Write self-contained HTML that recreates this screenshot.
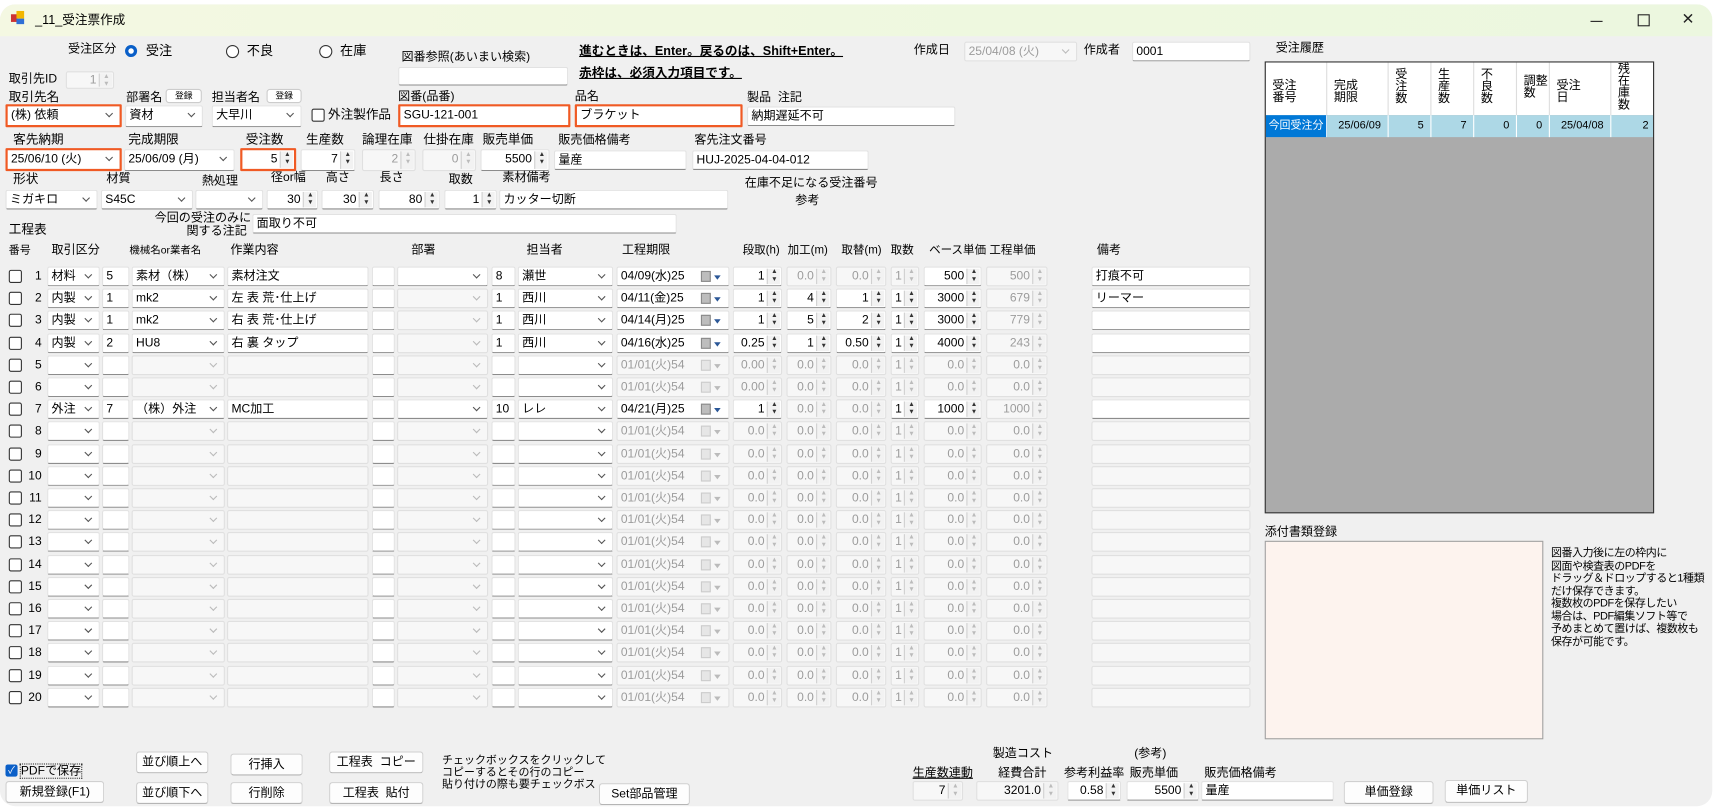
<!DOCTYPE html>
<html><head><meta charset="utf-8"><style>
html,body{margin:0;padding:0;background:#fff;width:1720px;height:812px;overflow:hidden}
#sc{position:absolute;left:0;top:0;width:1568px;height:740px;transform:scale(1.0969);transform-origin:0 0;font-family:"Liberation Sans","Noto Sans CJK JP",sans-serif;font-size:11px;color:#000}
#win{position:absolute;left:0;top:4px;width:1561px;height:731px;border-radius:14px;overflow:hidden;background:#f0f0f0}
#tb{position:absolute;left:0;top:0;width:100%;height:29px;background:linear-gradient(90deg,#f4f8e2,#eef8df 60%,#ecf7df)}
.l{position:absolute;white-space:nowrap;line-height:14px}
.e{position:absolute;box-sizing:border-box;height:18px;line-height:16px;padding:0 3px;white-space:nowrap;overflow:hidden}
.w{background:#fff;border:1px solid #e2e2e2;border-bottom-color:#8c8c8c;border-radius:2px}
.d{background:#f7f7f7;border:1px solid #e0e0e0;color:#9c9c9c;border-radius:2px}
.red{border:2px solid #f05a24;border-radius:1px}
.c{padding-right:16px}
.c::after{content:"";position:absolute;right:7px;top:4px;width:4px;height:4px;border-right:1px solid #555;border-bottom:1px solid #555;transform:rotate(45deg)}
.d.c::after{border-color:#bbb}
.s{text-align:right;padding-right:15px}
.s::after{content:"";position:absolute;right:1px;top:1px;bottom:1px;width:11px;background:#f2f2f2;border-left:1px solid #d0d0d0}
.s::before{content:"\25B2\A\25BC";white-space:pre;position:absolute;right:3px;top:1px;font-size:6px;line-height:7px;color:#333;z-index:1}
.d.s::before{color:#bbb}
.r{position:absolute;left:0;width:1150px;height:18px;line-height:16px}
.r .e{top:0}
.ck{position:absolute;left:8px;top:3px;width:10px;height:10px;border:1px solid #333;border-radius:2px;background:#fff}
.no{position:absolute;left:22px;width:16px;text-align:right;top:0;line-height:18px;font-weight:normal}
.kb{left:43px;width:48px}.kn{left:93px;width:25px}.km{left:120px;width:85px}.sg{left:207px;width:129px}
.bs{left:339px;width:21px}.bc{left:362px;width:83px}.tn{left:448px;width:22px}.tc{left:472px;width:87px}
.dt{left:562px;width:103px}.s1{left:668px;width:45px}.s2{left:717px;width:41px}.s3{left:762px;width:46px}
.s4{left:812px;width:26px}.s5{left:842px;width:53px}.s6{left:899px;width:56px}.bk{left:995px;width:145px}
.cal{position:absolute;right:16px;top:3px;width:9px;height:10px;background:#bdbdbd;border:1px solid #8a8a8a;box-sizing:border-box}
.cal::after{content:"";position:absolute;left:11px;top:3px;border-left:3px solid transparent;border-right:3px solid transparent;border-top:4px solid #2b5797}
.d .cal{background:#e6e6e6;border-color:#ccc}.d .cal::after{border-top-color:#bbb}
.btn{position:absolute;box-sizing:border-box;background:#fdfdfd;border:1px solid #d0d0d0;border-bottom-color:#b5b5b5;border-radius:3px;text-align:center;line-height:18px;height:20px;font-size:11px}
.sb{position:absolute;box-sizing:border-box;font-size:8px;background:#fff;border:1px solid #ccc;border-radius:3px;height:13px;line-height:11px;text-align:center}
.rad{position:absolute;width:10px;height:10px;border:1px solid #333;border-radius:50%;background:#fff}
.gh{position:absolute;top:0;height:48px;border-right:1px solid #ddd;line-height:11px;font-size:11px;padding:4px 0 0 6px;box-sizing:border-box}
.gr{position:absolute;top:0;height:20px;line-height:20px;text-align:right;padding-right:6px;box-sizing:border-box;border-right:1px solid #fff;font-size:10px}
</style></head><body><div id="sc"><div id="win">
<div id="tb">
<div style="position:absolute;left:10px;top:9px;width:6px;height:7px;background:#c33"></div>
<div style="position:absolute;left:15px;top:6px;width:7px;height:7px;background:#f2b600"></div>
<div style="position:absolute;left:15px;top:13px;width:7px;height:5px;background:#2f6fd6"></div>
<span class="l" style="left:32px;top:8px;font-size:11.5px">_11_受注票作成</span>
<div style="position:absolute;left:1450px;top:15px;width:11px;height:1px;background:#222"></div>
<div style="position:absolute;left:1493px;top:9px;width:9px;height:9px;border:1px solid #222"></div>
<span class="l" style="left:1533px;top:6px;font-size:14px;color:#222">✕</span>
</div>
<div style="position:absolute;left:0;top:-4px;width:100%">
<span class="l" style="left:62px;top:38px">受注区分</span>
<div class="rad" style="left:114px;top:41px;border:3.5px solid #0a5fc8;width:5px;height:5px"></div><span class="l" style="left:133px;top:39px;font-size:12px">受注</span>
<div class="rad" style="left:206px;top:41px"></div><span class="l" style="left:225px;top:39px;font-size:12px">不良</span>
<div class="rad" style="left:291px;top:41px"></div><span class="l" style="left:310px;top:39px;font-size:12px">在庫</span>
<span class="l" style="left:366px;top:45px">図番参照(あいまい検索)</span>
<div class="e w" style="left:363px;top:61px;width:155px;height:17px"></div>
<span class="l" style="left:528px;top:40px;font-weight:bold;font-size:11.5px;text-decoration:underline">進むときは、Enter。戻るのは、Shift+Enter。</span>
<span class="l" style="left:528px;top:60px;font-weight:bold;font-size:11.5px;text-decoration:underline">赤枠は、必須入力項目です。</span>
<span class="l" style="left:833px;top:39px">作成日</span>
<div class="e d c" style="left:879px;top:38px;width:103px">25/04/08 (火)</div>
<span class="l" style="left:988px;top:39px">作成者</span>
<div class="e w" style="left:1032px;top:38px;width:108px">0001</div>
<span class="l" style="left:8px;top:65px">取引先ID</span>
<div class="e d s" style="left:60px;top:65px;width:44px;height:16px;line-height:14px">1</div>
<span class="l" style="left:8px;top:82px;font-size:11.5px">取引先名</span>
<span class="l" style="left:115px;top:82px">部署名</span><div class="sb" style="left:151px;top:81px;width:33px">登録</div>
<span class="l" style="left:193px;top:82px">担当者名</span><div class="sb" style="left:243px;top:81px;width:32px">登録</div>
<span class="l" style="left:363px;top:81px">図番(品番)</span>
<span class="l" style="left:524px;top:81px">品名</span>
<span class="l" style="left:681px;top:82px">製品&nbsp;&nbsp;注記</span>
<div class="e w c red" style="left:5px;top:95px;width:106px;height:21px;line-height:17px">(株) 依頼</div>
<div class="e w c" style="left:114px;top:96px;width:71px;height:20px">資材</div>
<div class="e w c" style="left:193px;top:96px;width:82px;height:20px">大早川</div>
<div style="position:absolute;left:284px;top:99px;width:10px;height:10px;border:1px solid #333;border-radius:2px;background:#fff"></div>
<span class="l" style="left:299px;top:98px;font-size:11.5px">外注製作品</span>
<div class="e w red" style="left:363px;top:95px;width:157px;height:21px;line-height:17px">SGU-121-001</div>
<div class="e w red" style="left:524px;top:95px;width:153px;height:21px;line-height:17px">ブラケット</div>
<div class="e w" style="left:681px;top:97px;width:190px">納期遅延不可</div>
<span class="l" style="left:12px;top:121px;font-size:11.5px">客先納期</span>
<span class="l" style="left:117px;top:121px;font-size:11.5px">完成期限</span>
<span class="l" style="left:224px;top:121px;font-size:11.5px">受注数</span>
<span class="l" style="left:279px;top:121px;font-size:11.5px">生産数</span>
<span class="l" style="left:330px;top:121px;font-size:11.5px">論理在庫</span>
<span class="l" style="left:386px;top:121px;font-size:11.5px">仕掛在庫</span>
<span class="l" style="left:440px;top:121px;font-size:11.5px">販売単価</span>
<span class="l" style="left:509px;top:121px">販売価格備考</span>
<span class="l" style="left:633px;top:121px">客先注文番号</span>
<div class="e w c red" style="left:5px;top:135px;width:106px;height:21px;line-height:17px">25/06/10 (火)</div>
<div class="e w c" style="left:113px;top:136px;width:101px;height:20px">25/06/09 (月)</div>
<div class="e w s red" style="left:219px;top:135px;width:51px;height:21px;line-height:17px">5</div>
<div class="e w s" style="left:274px;top:136px;width:50px;height:20px">7</div>
<div class="e d s" style="left:330px;top:136px;width:49px;height:20px">2</div>
<div class="e d s" style="left:385px;top:136px;width:49px;height:20px">0</div>
<div class="e w s" style="left:438px;top:136px;width:63px;height:20px">5500</div>
<div class="e w" style="left:505px;top:137px;width:121px">量産</div>
<div class="e w" style="left:631px;top:137px;width:161px">HUJ-2025-04-04-012</div>
<span class="l" style="left:12px;top:157px;font-size:11.5px">形状</span>
<span class="l" style="left:97px;top:156px">材質</span>
<span class="l" style="left:184px;top:158px">熱処理</span>
<span class="l" style="left:247px;top:155px">径or幅</span>
<span class="l" style="left:297px;top:155px">高さ</span>
<span class="l" style="left:346px;top:155px">長さ</span>
<span class="l" style="left:409px;top:157px">取数</span>
<span class="l" style="left:458px;top:155px">素材備考</span>
<span class="l" style="left:679px;top:160px">在庫不足になる受注番号</span>
<span class="l" style="left:725px;top:176px">参考</span>
<div class="e w c" style="left:5px;top:173px;width:84px">ミガキロ</div>
<div class="e w c" style="left:92px;top:173px;width:84px">S45C</div>
<div class="e w c" style="left:178px;top:173px;width:62px"></div>
<div class="e w s" style="left:243px;top:173px;width:47px">30</div>
<div class="e w s" style="left:293px;top:173px;width:48px">30</div>
<div class="e w s" style="left:345px;top:173px;width:56px">80</div>
<div class="e w s" style="left:405px;top:173px;width:48px">1</div>
<div class="e w" style="left:455px;top:173px;width:209px">カッター切断</div>
<span class="l" style="left:141px;top:192px">今回の受注のみに</span>
<span class="l" style="left:170px;top:204px">関する注記</span>
<div class="e w" style="left:230px;top:195px;width:387px">面取り不可</div>
<span class="l" style="left:8px;top:203px;font-size:11.5px">工程表</span>
<span class="l" style="left:8px;top:222px;font-size:10px">番号</span>
<span class="l" style="left:47px;top:221px">取引区分</span>
<span class="l" style="left:118px;top:222px;font-size:9.5px">機械名or業者名</span>
<span class="l" style="left:210px;top:221px">作業内容</span>
<span class="l" style="left:375px;top:221px">部署</span>
<span class="l" style="left:480px;top:221px">担当者</span>
<span class="l" style="left:567px;top:221px">工程期限</span>
<span class="l" style="left:677px;top:221px;font-size:10.5px">段取(h)</span>
<span class="l" style="left:718px;top:221px;font-size:10.5px">加工(m)</span>
<span class="l" style="left:767px;top:221px;font-size:10.5px">取替(m)</span>
<span class="l" style="left:812px;top:221px;font-size:10.5px">取数</span>
<span class="l" style="left:847px;top:221px;font-size:10.5px">ベース単価</span>
<span class="l" style="left:902px;top:221px;font-size:10.5px">工程単価</span>
<span class="l" style="left:1000px;top:221px">備考</span>

<div class="r" style="top:243px"><i class="ck"></i><b class="no">1</b><span class="e w c kb">材料</span><span class="e w kn">5</span><span class="e w c km">素材（株）</span><span class="e w sg">素材注文</span><span class="e w bs"></span><span class="e w c bc"></span><span class="e w tn">8</span><span class="e w c tc">瀬世</span><span class="e w dt">04/09(水)25<i class="cal"></i></span><span class="e w s s1">1</span><span class="e d s s2">0.0</span><span class="e d s s3">0.0</span><span class="e d s s4">1</span><span class="e w s s5">500</span><span class="e d s s6">500</span><span class="e w bk">打痕不可</span></div>
<div class="r" style="top:263.2px"><i class="ck"></i><b class="no">2</b><span class="e w c kb">内製</span><span class="e w kn">1</span><span class="e w c km">mk2</span><span class="e w sg">左 表 荒･仕上げ</span><span class="e w bs"></span><span class="e d c bc"></span><span class="e w tn">1</span><span class="e w c tc">西川</span><span class="e w dt">04/11(金)25<i class="cal"></i></span><span class="e w s s1">1</span><span class="e w s s2">4</span><span class="e w s s3">1</span><span class="e w s s4">1</span><span class="e w s s5">3000</span><span class="e d s s6">679</span><span class="e w bk">リーマー</span></div>
<div class="r" style="top:283.4px"><i class="ck"></i><b class="no">3</b><span class="e w c kb">内製</span><span class="e w kn">1</span><span class="e w c km">mk2</span><span class="e w sg">右 表 荒･仕上げ</span><span class="e w bs"></span><span class="e d c bc"></span><span class="e w tn">1</span><span class="e w c tc">西川</span><span class="e w dt">04/14(月)25<i class="cal"></i></span><span class="e w s s1">1</span><span class="e w s s2">5</span><span class="e w s s3">2</span><span class="e w s s4">1</span><span class="e w s s5">3000</span><span class="e d s s6">779</span><span class="e w bk"></span></div>
<div class="r" style="top:303.6px"><i class="ck"></i><b class="no">4</b><span class="e w c kb">内製</span><span class="e w kn">2</span><span class="e w c km">HU8</span><span class="e w sg">右 裏 タップ</span><span class="e w bs"></span><span class="e d c bc"></span><span class="e w tn">1</span><span class="e w c tc">西川</span><span class="e w dt">04/16(水)25<i class="cal"></i></span><span class="e w s s1">0.25</span><span class="e w s s2">1</span><span class="e w s s3">0.50</span><span class="e w s s4">1</span><span class="e w s s5">4000</span><span class="e d s s6">243</span><span class="e w bk"></span></div>
<div class="r" style="top:323.8px"><i class="ck"></i><b class="no">5</b><span class="e w c kb"></span><span class="e w kn"></span><span class="e d c km"></span><span class="e d sg"></span><span class="e w bs"></span><span class="e d c bc"></span><span class="e w tn"></span><span class="e w c tc"></span><span class="e d dt">01/01(火)54<i class="cal"></i></span><span class="e d s s1">0.00</span><span class="e d s s2">0.0</span><span class="e d s s3">0.0</span><span class="e d s s4">1</span><span class="e d s s5">0.0</span><span class="e d s s6">0.0</span><span class="e d bk"></span></div>
<div class="r" style="top:344px"><i class="ck"></i><b class="no">6</b><span class="e w c kb"></span><span class="e w kn"></span><span class="e d c km"></span><span class="e d sg"></span><span class="e w bs"></span><span class="e d c bc"></span><span class="e w tn"></span><span class="e w c tc"></span><span class="e d dt">01/01(火)54<i class="cal"></i></span><span class="e d s s1">0.00</span><span class="e d s s2">0.0</span><span class="e d s s3">0.0</span><span class="e d s s4">1</span><span class="e d s s5">0.0</span><span class="e d s s6">0.0</span><span class="e d bk"></span></div>
<div class="r" style="top:364.2px"><i class="ck"></i><b class="no">7</b><span class="e w c kb">外注</span><span class="e w kn">7</span><span class="e w c km">（株）外注</span><span class="e w sg">MC加工</span><span class="e w bs"></span><span class="e w c bc"></span><span class="e w tn">10</span><span class="e w c tc">レレ</span><span class="e w dt">04/21(月)25<i class="cal"></i></span><span class="e w s s1">1</span><span class="e d s s2">0.0</span><span class="e d s s3">0.0</span><span class="e w s s4">1</span><span class="e w s s5">1000</span><span class="e d s s6">1000</span><span class="e w bk"></span></div>
<div class="r" style="top:384.4px"><i class="ck"></i><b class="no">8</b><span class="e w c kb"></span><span class="e w kn"></span><span class="e d c km"></span><span class="e d sg"></span><span class="e w bs"></span><span class="e d c bc"></span><span class="e w tn"></span><span class="e w c tc"></span><span class="e d dt">01/01(火)54<i class="cal"></i></span><span class="e d s s1">0.0</span><span class="e d s s2">0.0</span><span class="e d s s3">0.0</span><span class="e d s s4">1</span><span class="e d s s5">0.0</span><span class="e d s s6">0.0</span><span class="e d bk"></span></div>
<div class="r" style="top:404.6px"><i class="ck"></i><b class="no">9</b><span class="e w c kb"></span><span class="e w kn"></span><span class="e d c km"></span><span class="e d sg"></span><span class="e w bs"></span><span class="e d c bc"></span><span class="e w tn"></span><span class="e w c tc"></span><span class="e d dt">01/01(火)54<i class="cal"></i></span><span class="e d s s1">0.0</span><span class="e d s s2">0.0</span><span class="e d s s3">0.0</span><span class="e d s s4">1</span><span class="e d s s5">0.0</span><span class="e d s s6">0.0</span><span class="e d bk"></span></div>
<div class="r" style="top:424.8px"><i class="ck"></i><b class="no">10</b><span class="e w c kb"></span><span class="e w kn"></span><span class="e d c km"></span><span class="e d sg"></span><span class="e w bs"></span><span class="e d c bc"></span><span class="e w tn"></span><span class="e w c tc"></span><span class="e d dt">01/01(火)54<i class="cal"></i></span><span class="e d s s1">0.0</span><span class="e d s s2">0.0</span><span class="e d s s3">0.0</span><span class="e d s s4">1</span><span class="e d s s5">0.0</span><span class="e d s s6">0.0</span><span class="e d bk"></span></div>
<div class="r" style="top:445px"><i class="ck"></i><b class="no">11</b><span class="e w c kb"></span><span class="e w kn"></span><span class="e d c km"></span><span class="e d sg"></span><span class="e w bs"></span><span class="e d c bc"></span><span class="e w tn"></span><span class="e w c tc"></span><span class="e d dt">01/01(火)54<i class="cal"></i></span><span class="e d s s1">0.0</span><span class="e d s s2">0.0</span><span class="e d s s3">0.0</span><span class="e d s s4">1</span><span class="e d s s5">0.0</span><span class="e d s s6">0.0</span><span class="e d bk"></span></div>
<div class="r" style="top:465.2px"><i class="ck"></i><b class="no">12</b><span class="e w c kb"></span><span class="e w kn"></span><span class="e d c km"></span><span class="e d sg"></span><span class="e w bs"></span><span class="e d c bc"></span><span class="e w tn"></span><span class="e w c tc"></span><span class="e d dt">01/01(火)54<i class="cal"></i></span><span class="e d s s1">0.0</span><span class="e d s s2">0.0</span><span class="e d s s3">0.0</span><span class="e d s s4">1</span><span class="e d s s5">0.0</span><span class="e d s s6">0.0</span><span class="e d bk"></span></div>
<div class="r" style="top:485.4px"><i class="ck"></i><b class="no">13</b><span class="e w c kb"></span><span class="e w kn"></span><span class="e d c km"></span><span class="e d sg"></span><span class="e w bs"></span><span class="e d c bc"></span><span class="e w tn"></span><span class="e w c tc"></span><span class="e d dt">01/01(火)54<i class="cal"></i></span><span class="e d s s1">0.0</span><span class="e d s s2">0.0</span><span class="e d s s3">0.0</span><span class="e d s s4">1</span><span class="e d s s5">0.0</span><span class="e d s s6">0.0</span><span class="e d bk"></span></div>
<div class="r" style="top:505.6px"><i class="ck"></i><b class="no">14</b><span class="e w c kb"></span><span class="e w kn"></span><span class="e d c km"></span><span class="e d sg"></span><span class="e w bs"></span><span class="e d c bc"></span><span class="e w tn"></span><span class="e w c tc"></span><span class="e d dt">01/01(火)54<i class="cal"></i></span><span class="e d s s1">0.0</span><span class="e d s s2">0.0</span><span class="e d s s3">0.0</span><span class="e d s s4">1</span><span class="e d s s5">0.0</span><span class="e d s s6">0.0</span><span class="e d bk"></span></div>
<div class="r" style="top:525.8px"><i class="ck"></i><b class="no">15</b><span class="e w c kb"></span><span class="e w kn"></span><span class="e d c km"></span><span class="e d sg"></span><span class="e w bs"></span><span class="e d c bc"></span><span class="e w tn"></span><span class="e w c tc"></span><span class="e d dt">01/01(火)54<i class="cal"></i></span><span class="e d s s1">0.0</span><span class="e d s s2">0.0</span><span class="e d s s3">0.0</span><span class="e d s s4">1</span><span class="e d s s5">0.0</span><span class="e d s s6">0.0</span><span class="e d bk"></span></div>
<div class="r" style="top:546px"><i class="ck"></i><b class="no">16</b><span class="e w c kb"></span><span class="e w kn"></span><span class="e d c km"></span><span class="e d sg"></span><span class="e w bs"></span><span class="e d c bc"></span><span class="e w tn"></span><span class="e w c tc"></span><span class="e d dt">01/01(火)54<i class="cal"></i></span><span class="e d s s1">0.0</span><span class="e d s s2">0.0</span><span class="e d s s3">0.0</span><span class="e d s s4">1</span><span class="e d s s5">0.0</span><span class="e d s s6">0.0</span><span class="e d bk"></span></div>
<div class="r" style="top:566.2px"><i class="ck"></i><b class="no">17</b><span class="e w c kb"></span><span class="e w kn"></span><span class="e d c km"></span><span class="e d sg"></span><span class="e w bs"></span><span class="e d c bc"></span><span class="e w tn"></span><span class="e w c tc"></span><span class="e d dt">01/01(火)54<i class="cal"></i></span><span class="e d s s1">0.0</span><span class="e d s s2">0.0</span><span class="e d s s3">0.0</span><span class="e d s s4">1</span><span class="e d s s5">0.0</span><span class="e d s s6">0.0</span><span class="e d bk"></span></div>
<div class="r" style="top:586.4px"><i class="ck"></i><b class="no">18</b><span class="e w c kb"></span><span class="e w kn"></span><span class="e d c km"></span><span class="e d sg"></span><span class="e w bs"></span><span class="e d c bc"></span><span class="e w tn"></span><span class="e w c tc"></span><span class="e d dt">01/01(火)54<i class="cal"></i></span><span class="e d s s1">0.0</span><span class="e d s s2">0.0</span><span class="e d s s3">0.0</span><span class="e d s s4">1</span><span class="e d s s5">0.0</span><span class="e d s s6">0.0</span><span class="e d bk"></span></div>
<div class="r" style="top:606.6px"><i class="ck"></i><b class="no">19</b><span class="e w c kb"></span><span class="e w kn"></span><span class="e d c km"></span><span class="e d sg"></span><span class="e w bs"></span><span class="e d c bc"></span><span class="e w tn"></span><span class="e w c tc"></span><span class="e d dt">01/01(火)54<i class="cal"></i></span><span class="e d s s1">0.0</span><span class="e d s s2">0.0</span><span class="e d s s3">0.0</span><span class="e d s s4">1</span><span class="e d s s5">0.0</span><span class="e d s s6">0.0</span><span class="e d bk"></span></div>
<div class="r" style="top:626.8px"><i class="ck"></i><b class="no">20</b><span class="e w c kb"></span><span class="e w kn"></span><span class="e d c km"></span><span class="e d sg"></span><span class="e w bs"></span><span class="e d c bc"></span><span class="e w tn"></span><span class="e w c tc"></span><span class="e d dt">01/01(火)54<i class="cal"></i></span><span class="e d s s1">0.0</span><span class="e d s s2">0.0</span><span class="e d s s3">0.0</span><span class="e d s s4">1</span><span class="e d s s5">0.0</span><span class="e d s s6">0.0</span><span class="e d bk"></span></div>

<div style="position:absolute;left:5px;top:697px;width:11px;height:11px;background:#0a5fc8;border-radius:2px;color:#fff;font-size:9px;line-height:11px;text-align:center">✓</div>
<span class="l" style="left:18px;top:696px;border:1px dotted #333;line-height:12px">PDFで保存</span>
<div class="btn" style="left:5px;top:712px;width:90px">新規登録(F1)</div>
<div class="btn" style="left:124px;top:685px;width:66px">並び順上へ</div>
<div class="btn" style="left:124px;top:713px;width:66px">並び順下へ</div>
<div class="btn" style="left:210px;top:687px;width:66px">行挿入</div>
<div class="btn" style="left:210px;top:713px;width:66px">行削除</div>
<div class="btn" style="left:300px;top:685px;width:86px">工程表&nbsp;&nbsp;コピー</div>
<div class="btn" style="left:300px;top:713px;width:86px">工程表&nbsp;&nbsp;貼付</div>
<span class="l" style="left:403px;top:688px;font-size:10px;line-height:11px">チェックボックスをクリックして<br>コピーするとその行のコピー<br>貼り付けの際も要チェックボス</span>
<div class="btn" style="left:546px;top:714px;width:83px">Set部品管理</div>
<span class="l" style="left:832px;top:698px;text-decoration:underline">生産数連動</span>
<div class="e d s" style="left:832px;top:712px;width:46px;color:#000">7</div>
<span class="l" style="left:905px;top:680px">製造コスト</span>
<span class="l" style="left:910px;top:698px">経費合計</span>
<div class="e d s" style="left:890px;top:712px;width:75px;color:#000">3201.0</div>
<span class="l" style="left:970px;top:698px">参考利益率</span>
<div class="e w s" style="left:973px;top:712px;width:49px">0.58</div>
<span class="l" style="left:1034px;top:680px">(参考)</span>
<span class="l" style="left:1030px;top:698px">販売単価</span>
<div class="e w s" style="left:1027px;top:712px;width:66px">5500</div>
<span class="l" style="left:1098px;top:698px">販売価格備考</span>
<div class="e w" style="left:1095px;top:712px;width:121px">量産</div>
<div class="btn" style="left:1225px;top:712px;width:82px;height:21px">単価登録</div>
<div class="btn" style="left:1317px;top:711px;width:76px;height:21px">単価リスト</div>

<span class="l" style="left:1163px;top:37px">受注履歴</span>
<div style="position:absolute;left:1153px;top:56px;width:355px;height:412px;border:1px solid #333;box-sizing:border-box;background:#ababab;overflow:hidden">
<div style="position:absolute;left:0;top:0;width:100%;height:48px;background:#fff"></div>
<div class="gh" style="left:0;width:56px;padding-top:16px">受注<br>番号</div>
<div class="gh" style="left:56px;width:56px;padding-top:16px">完成<br>期限</div>
<div class="gh" style="left:112px;width:39px;padding-top:6px">受<br>注<br>数</div>
<div class="gh" style="left:151px;width:39px;padding-top:6px">生<br>産<br>数</div>
<div class="gh" style="left:190px;width:39px;padding-top:6px">不<br>良<br>数</div>
<div class="gh" style="left:229px;width:30px;padding-top:12px">調整<br>数</div>
<div class="gh" style="left:259px;width:56px;padding-top:16px">受注<br>日</div>
<div class="gh" style="left:315px;width:40px;padding-top:1px;border-right:0">残<br>在<br>庫<br>数</div>
<div style="position:absolute;left:0;top:48px;width:100%;height:20px;background:#add8e6">
<div class="gr" style="left:0;width:56px;background:#0078d7;color:#fff;text-align:center;padding:0">今回受注分</div>
<div class="gr" style="left:56px;width:56px">25/06/09</div>
<div class="gr" style="left:112px;width:39px">5</div>
<div class="gr" style="left:151px;width:39px">7</div>
<div class="gr" style="left:190px;width:39px">0</div>
<div class="gr" style="left:229px;width:30px">0</div>
<div class="gr" style="left:259px;width:56px">25/04/08</div>
<div class="gr" style="left:315px;width:40px;border:0">2</div>
</div>
</div>
<span class="l" style="left:1153px;top:478px">添付書類登録</span>
<div style="position:absolute;left:1153px;top:493px;width:254px;height:181px;background:#fdf3ee;border:1px solid #a0a0a0;box-sizing:border-box"></div>
<span class="l" style="left:1414px;top:499px;font-size:10px;line-height:11.5px;letter-spacing:-0.4px">図番入力後に左の枠内に<br>図面や検査表のPDFを<br>ドラッグ＆ドロップすると1種類<br>だけ保存できます。<br>複数枚のPDFを保存したい<br>場合は、PDF編集ソフト等で<br>予めまとめて置けば、複数枚も<br>保存が可能です。</span>
</div>
</div></div></body></html>
